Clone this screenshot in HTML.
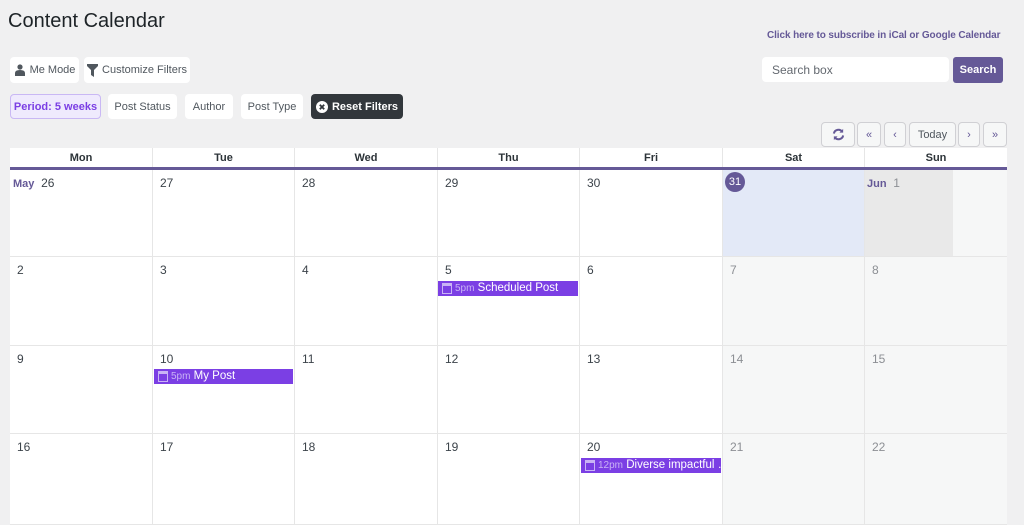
<!DOCTYPE html>
<html><head><meta charset="utf-8"><style>
*{box-sizing:border-box;margin:0;padding:0}
body{width:1024px;height:525px;background:#f0f0f1;font-family:"Liberation Sans",sans-serif;position:relative;overflow:hidden;color:#3c434a}
.a{position:absolute}
.btn{position:absolute;background:#fff;border-radius:4px;font-size:11px;color:#50575e;display:flex;align-items:center;justify-content:center;height:26px}
.nb{position:absolute;top:122px;height:25px;border:1px solid #d0d0d4;border-radius:4px;background:#f6f7f7;font-size:11px;color:#50575e;display:flex;align-items:center;justify-content:center}
.hd{position:absolute;top:148px;height:19px;background:#fff;font-size:11px;font-weight:bold;color:#2c3338;text-align:center;line-height:21px;border-right:1px solid #e6e6e6}
.c{position:absolute;background:#fff;border-right:1px solid #e6e6e6;border-bottom:1px solid #e6e6e6;font-size:12px;color:#3c434a;padding:6px 0 0 7px}
.w{background:#f6f7f7;color:#8c8f94}
.ev{position:absolute;height:15px;background:#7b3fe4;color:#fff;font-size:11.5px;line-height:15px;padding-left:17px;white-space:nowrap;overflow:hidden}
.ev i{font-style:normal;color:#c9b3f5;font-size:10px}
.ev b{position:absolute;left:4px;top:2px;width:10px;height:11px;border:1px solid #c9b3f5;border-top-width:3px}
</style></head><body>
<div class="a" style="left:8px;top:10px;font-size:20px;color:#1d2327">Content Calendar</div>
<div class="a" style="left:767px;top:30px;font-size:10px;font-weight:bold;color:#655997;letter-spacing:-0.1px">Click here to subscribe in iCal or Google Calendar</div>
<div class="a" style="left:762px;top:57px;width:187px;height:25px;background:#fff;border-radius:4px;font-size:12px;color:#646970;padding:6px 10px">Search box</div>
<div class="a" style="left:953px;top:57px;width:50px;height:26px;background:#655997;border-radius:3px;color:#fff;font-size:11px;font-weight:bold;text-align:center;line-height:26px">Search</div>
<div class="btn" style="left:10px;top:57px;width:69px"><svg width="12" height="12" viewBox="0 0 12 12" style="margin-right:4px"><circle cx="6" cy="3" r="2.6" fill="#50575e"/><path d="M1 12v-3q0-3 5-3t5 3v3z" fill="#50575e"/></svg>Me Mode</div>
<div class="btn" style="left:84px;top:57px;width:106px"><svg width="11" height="13" viewBox="0 0 11 13" style="margin-right:4px"><path d="M0 0h11v2L7 6v7L4 11V6L0 2z" fill="#50575e"/></svg>Customize Filters</div>
<div class="btn" style="left:10px;top:94px;width:91px;height:25px;background:#efeafd;border:1px solid #c9b8f4;color:#7b3fe4;font-weight:bold">Period: 5 weeks</div>
<div class="btn" style="left:108px;top:94px;width:69px;height:25px">Post Status</div>
<div class="btn" style="left:185px;top:94px;width:48px;height:25px">Author</div>
<div class="btn" style="left:241px;top:94px;width:62px;height:25px">Post Type</div>
<div class="btn" style="left:311px;top:94px;width:92px;height:25px;background:#32373c;color:#fff;font-weight:bold"><svg width="12" height="12" viewBox="0 0 12 12" style="margin-right:4px"><circle cx="6" cy="6" r="6" fill="#fff"/><path d="M3.8 3.8l4.4 4.4M8.2 3.8l-4.4 4.4" stroke="#32373c" stroke-width="1.8"/></svg>Reset Filters</div>
<div class="nb" style="left:821px;width:34px"><svg width="13" height="13" viewBox="0 0 14 14"><path d="M2 6a5 5 0 0 1 9-2M12 8a5 5 0 0 1-9 2" stroke="#655997" stroke-width="2.2" fill="none"/><path d="M12 1v4H8zM2 13V9h4z" fill="#655997"/></svg></div>
<div class="nb" style="left:857px;width:24px;color:#655997">«</div>
<div class="nb" style="left:884px;width:22px;color:#655997">‹</div>
<div class="nb" style="left:909px;width:47px">Today</div>
<div class="nb" style="left:958px;width:22px;color:#655997">›</div>
<div class="nb" style="left:983px;width:24px;color:#655997">»</div>
<div class="hd" style="left:10px;width:143px">Mon</div><div class="hd" style="left:153px;width:142px">Tue</div><div class="hd" style="left:295px;width:143px">Wed</div><div class="hd" style="left:438px;width:142px">Thu</div><div class="hd" style="left:580px;width:143px">Fri</div><div class="hd" style="left:723px;width:142px">Sat</div><div class="hd" style="left:865px;width:142px;border-right:0">Sun</div>
<div class="a" style="left:10px;top:167px;width:997px;height:3px;background:#655997"></div>
<div class="c" style="left:10px;top:170px;width:143px;height:87px;padding-left:3px"><b style="color:#655997;font-size:11px">May</b>&nbsp; 26</div>
<div class="c" style="left:153px;top:170px;width:142px;height:87px">27</div>
<div class="c" style="left:295px;top:170px;width:143px;height:87px">28</div>
<div class="c" style="left:438px;top:170px;width:142px;height:87px">29</div>
<div class="c" style="left:580px;top:170px;width:143px;height:87px">30</div>
<div class="c" style="left:723px;top:170px;width:142px;height:87px;background:#e3e9f7;padding:2px 0 0 2px"><div style="width:20px;height:20px;border-radius:50%;background:#655997;color:#fff;font-size:11px;text-align:center;line-height:20px">31</div></div>
<div class="c" style="left:865px;top:170px;width:142px;height:87px;background:linear-gradient(90deg,#e9e9e9 0 88px,#f6f7f7 88px);border-right:0;color:#8c8f94;padding-left:2px"><b style="color:#655997;font-size:11px">Jun</b>&nbsp; 1</div>
<div class="c" style="left:10px;top:257px;width:143px;height:89px">2</div>
<div class="c" style="left:153px;top:257px;width:142px;height:89px">3</div>
<div class="c" style="left:295px;top:257px;width:143px;height:89px">4</div>
<div class="c" style="left:438px;top:257px;width:142px;height:89px">5</div>
<div class="c" style="left:580px;top:257px;width:143px;height:89px">6</div>
<div class="c w" style="left:723px;top:257px;width:142px;height:89px">7</div>
<div class="c w" style="left:865px;top:257px;width:142px;height:89px;border-right:0">8</div>
<div class="c" style="left:10px;top:346px;width:143px;height:88px">9</div>
<div class="c" style="left:153px;top:346px;width:142px;height:88px">10</div>
<div class="c" style="left:295px;top:346px;width:143px;height:88px">11</div>
<div class="c" style="left:438px;top:346px;width:142px;height:88px">12</div>
<div class="c" style="left:580px;top:346px;width:143px;height:88px">13</div>
<div class="c w" style="left:723px;top:346px;width:142px;height:88px">14</div>
<div class="c w" style="left:865px;top:346px;width:142px;height:88px;border-right:0">15</div>
<div class="c" style="left:10px;top:434px;width:143px;height:91px">16</div>
<div class="c" style="left:153px;top:434px;width:142px;height:91px">17</div>
<div class="c" style="left:295px;top:434px;width:143px;height:91px">18</div>
<div class="c" style="left:438px;top:434px;width:142px;height:91px">19</div>
<div class="c" style="left:580px;top:434px;width:143px;height:91px">20</div>
<div class="c w" style="left:723px;top:434px;width:142px;height:91px">21</div>
<div class="c w" style="left:865px;top:434px;width:142px;height:91px;border-right:0">22</div>
<div class="ev" style="left:438px;top:281px;width:140px"><b></b><i>5pm</i> Scheduled Post</div>
<div class="ev" style="left:154px;top:369px;width:139px"><b></b><i>5pm</i> My Post</div>
<div class="ev" style="left:581px;top:458px;width:140px"><b></b><i>12pm</i> Diverse impactful …</div>
</body></html>
